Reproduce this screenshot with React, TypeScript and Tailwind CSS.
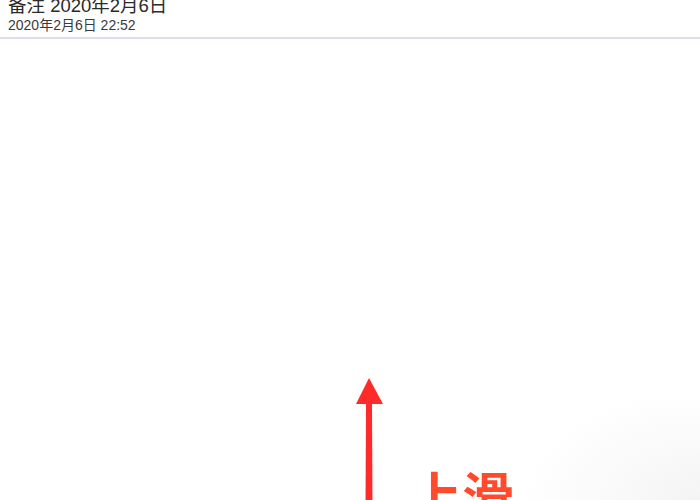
import React from "react";

const FONT = {
  fontFamily: '"Liberation Sans", "Noto Sans CJK SC", "Noto Sans", sans-serif',
};
const CJK = { fontFamily: '"Noto Sans CJK SC", "Noto Sans", sans-serif' };

function UpArrow() {
  return (
    <svg
      className="absolute left-[354px] top-[377px]"
      width="32"
      height="130"
      viewBox="0 0 32 130"
    >
      <polygon points="15,1 2,27 29,27" fill="#ff2b2b" />
      <polygon points="12,26 18,26 18.5,130 11.5,130" fill="#ff2b2b" />
    </svg>
  );
}

export default function App() {
  return (
    <div
      className="relative h-[500px] w-[700px] overflow-hidden bg-white"
      style={FONT}
    >
      <div className="flex h-[37px] flex-col px-2">
        <div className="-mt-[5px] text-[18.5px] leading-[22px] text-[#2b2b2b]">
          备注 2020年2月6日
        </div>
        <div className="text-[14px] leading-[17px] text-[#3a3a3a]">
          2020年2月6日 22:52
        </div>
      </div>
      <div className="h-[2px] bg-[#dcdfea]" />
      <div className="absolute bottom-0 right-0 h-[110px] w-[180px] bg-[radial-gradient(ellipse_at_bottom_right,#f4f4f4_0%,#ffffff_70%)]" />
      <UpArrow />
      <div
        className="absolute left-[410px] top-[464px] text-[52px] font-bold leading-[60px] text-[#ff4a2b]"
        style={CJK}
      >
        上滑
      </div>
    </div>
  );
}
